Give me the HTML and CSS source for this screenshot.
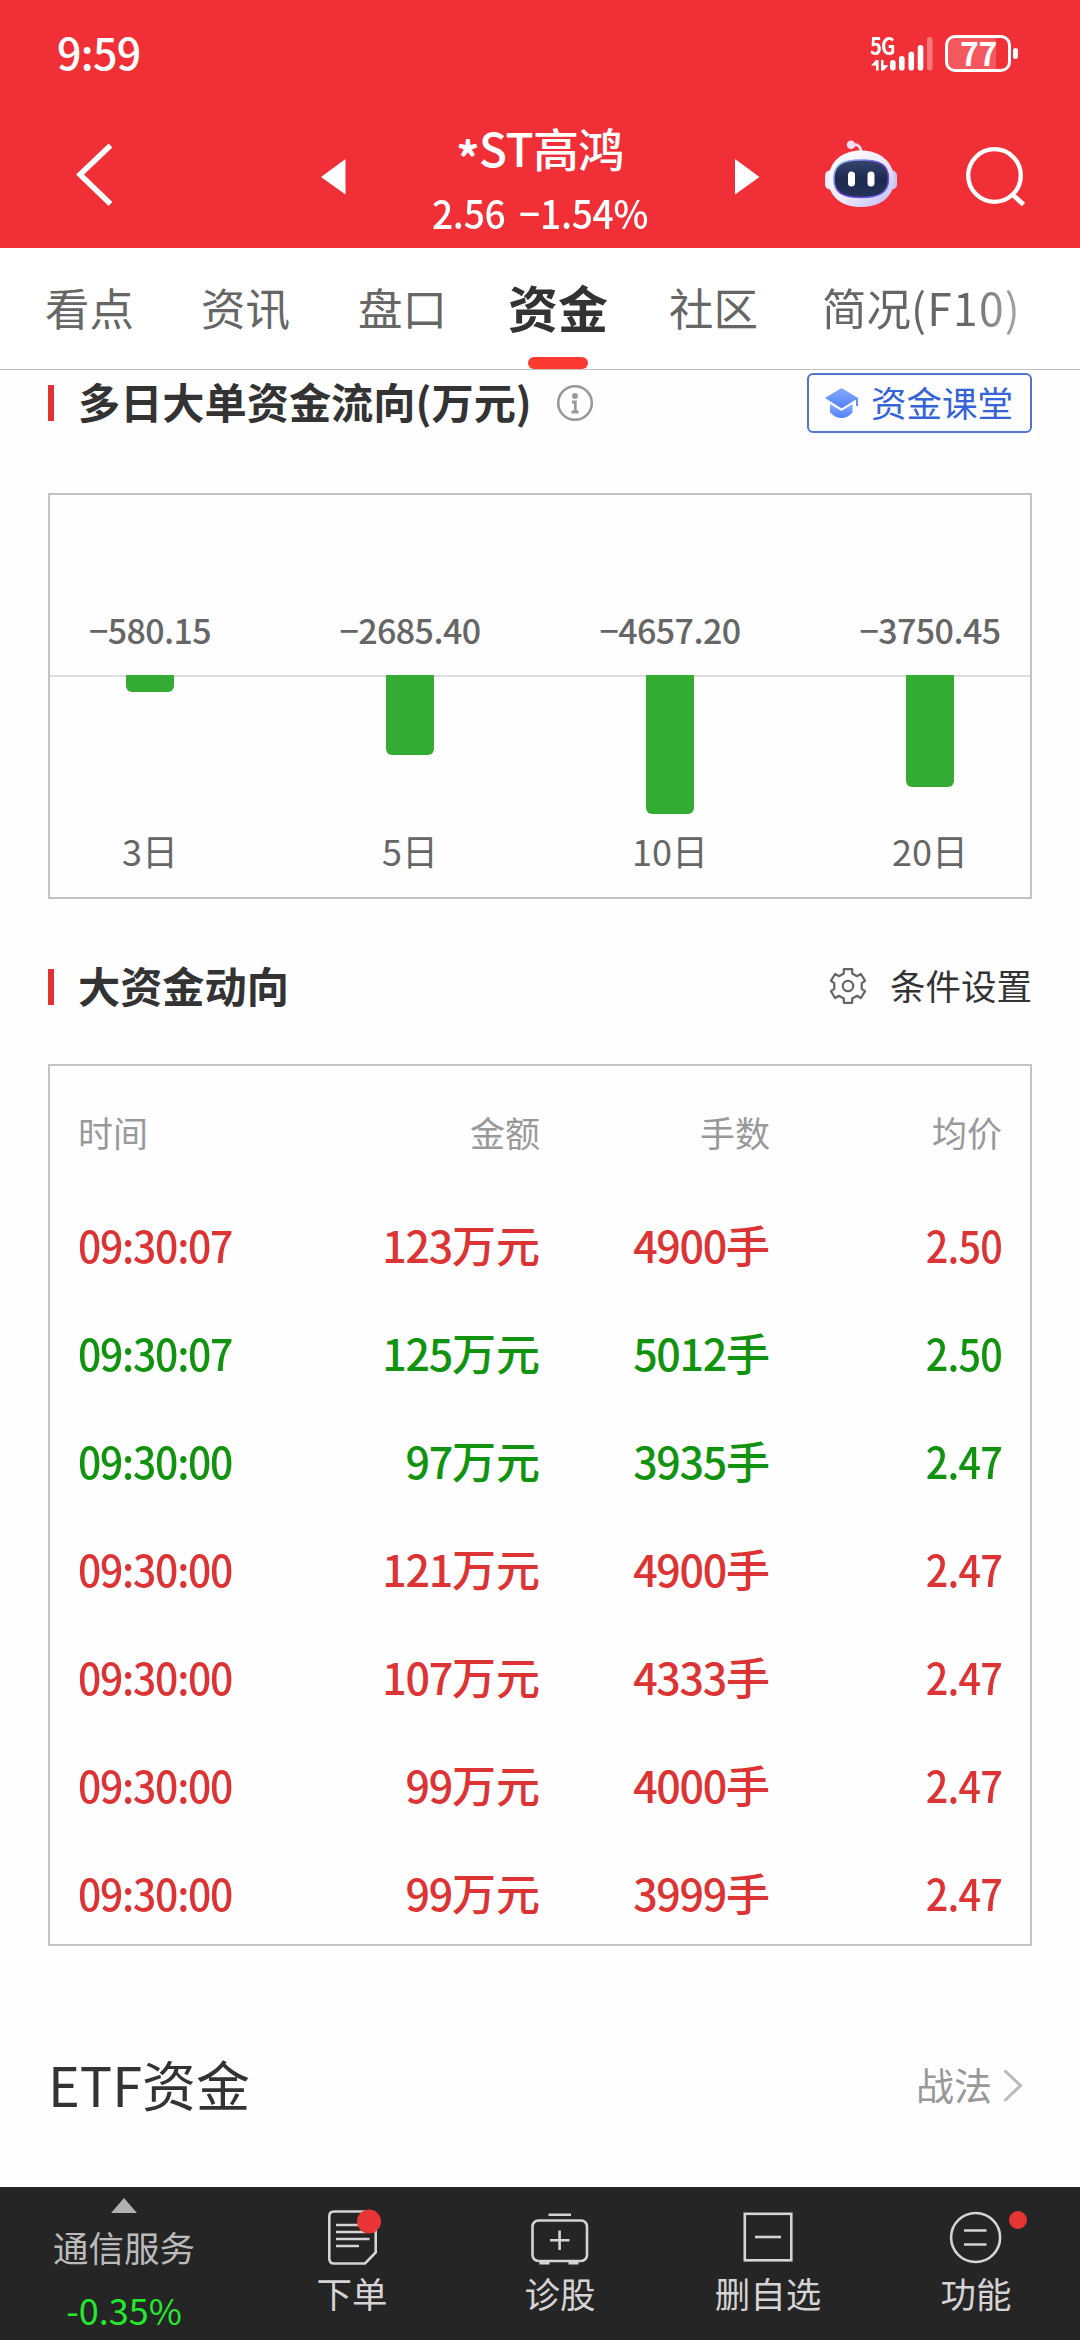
FILE: index.html
```html
<!DOCTYPE html>
<html lang="zh-CN">
<head>
<meta charset="utf-8">
<title>*ST高鸿 - 资金</title>
<link rel="stylesheet" href="styles.css">
</head>
<body>
<header class="header">
  <div class="status">
    <span class="clock">9:59</span>
    <div class="status-icons">
      <div class="net">
        <span class="net-type">5G</span>
        <svg class="signal" viewBox="870 35 65 40" width="65" height="40">
          <g fill="#fff">
            <path d="M871 65.500 876 60h2.500v10.500h-2.500v-5zM881 60h2.500v5l5 .5-5 5H881z"/>
            <rect x="890" y="60" width="5.600" height="10.500" rx="2.800"/>
            <rect x="899" y="56" width="5.600" height="14.500" rx="2.800"/>
            <rect x="908.500" y="51.500" width="5.600" height="19" rx="2.800"/>
            <rect x="917.700" y="45" width="5.600" height="25.500" rx="2.800"/>
            <rect x="927" y="37" width="5.600" height="33.500" rx="2.800" opacity=".35"/>
          </g>
        </svg>
      </div>
      <div class="battery"><span class="battery-fill"></span><span class="battery-text">77</span></div>
      <span class="battery-tip"></span>
    </div>
  </div>
  <div class="appbar">
    <svg class="back" viewBox="65 140 60 70" width="60" height="70"><path d="M110.500 145.500 80 174.500l30.500 29.500" fill="none" stroke="#fff" stroke-width="5.500"/></svg>
    <svg class="prev" viewBox="318 155 30 44" width="30" height="44"><path d="M345.500 159v35.500L321 177z" fill="#fff"/></svg>
    <div class="stock">
      <div class="stock-name"><span class="star">*</span>ST高鸿</div>
      <div class="stock-quote">2.56 −1.54%</div>
    </div>
    <svg class="next" viewBox="732 155 30 44" width="30" height="44"><path d="M735 159v35.500L759.500 177z" fill="#fff"/></svg>
    <svg class="robot" viewBox="0 0 90 90" width="90" height="90">
      <defs>
        <linearGradient id="shell" x1="0" y1="0" x2="1" y2="1"><stop offset="0" stop-color="#fff"/><stop offset=".55" stop-color="#ece9fc"/><stop offset="1" stop-color="#bfb9f2"/></linearGradient>
        <linearGradient id="rim" x1="0" y1="0" x2="1" y2="1"><stop offset="0" stop-color="#8fd6f2"/><stop offset=".5" stop-color="#6a3fd8"/><stop offset="1" stop-color="#5d62e0"/></linearGradient>
        <linearGradient id="face" x1="0" y1="0" x2="0" y2="1"><stop offset="0" stop-color="#39456e"/><stop offset=".5" stop-color="#1c2a50"/><stop offset="1" stop-color="#243159"/></linearGradient>
      </defs>
      <rect x="10" y="40.500" width="10" height="19" rx="5" fill="#eceafa"/>
      <rect x="72" y="40.500" width="10" height="19" rx="5" fill="#cbc6f2"/>
      <path d="M37 14.500q9-1 9 8" fill="none" stroke="#efd6ee" stroke-width="3"/>
      <circle cx="36" cy="14.800" r="4.300" fill="#f1def4"/>
      <path d="M46 20.500C64 20.500 79 31 79 50 79 67 65 77 46 77S13.500 67 13.500 50C13.500 31 28 20.500 46 20.500z" fill="url(#shell)"/>
      <path d="M46 30C64 30 73.500 34 73.500 48.500 73.500 63 64 67.500 46 67.500S19 63 19 48.500C19 34 28 30 46 30z" fill="url(#face)" stroke="url(#rim)" stroke-width="1.500"/>
      <rect x="33" y="41.500" width="7" height="15" rx="3.500" fill="#fff"/>
      <rect x="52.500" y="41.500" width="7" height="15" rx="3.500" fill="#fff"/>
    </svg>
    <svg class="search" viewBox="963 145 65 65" width="65" height="65"><g fill="none" stroke="#fff" stroke-width="4.300"><circle cx="994.500" cy="175.500" r="26.300"/><path d="M1012.500 194.500 1023.500 204.500" stroke-width="4.800"/></g></svg>
  </div>
</header>

<nav class="tabs">
  <a class="tab">看点</a>
  <a class="tab">资讯</a>
  <a class="tab">盘口</a>
  <a class="tab tab-active">资金</a>
  <a class="tab">社区</a>
  <a class="tab tab-fade">简况<span class="code">(F10)</span></a>
</nav>

<main class="content">
  <div class="section-head flow-head">
    <h2 class="section-title">多日大单资金流向(万元)</h2>
    <svg class="info" viewBox="555 383 40 40" width="40" height="40"><circle cx="575" cy="403" r="16.800" fill="none" stroke="#999" stroke-width="2.600"/><circle cx="575" cy="396" r="3" fill="#999"/><path d="M572 402h3.300v10M571.500 412h7" fill="none" stroke="#999" stroke-width="2.800"/></svg>
    <a class="lesson">
      <svg viewBox="824 386 36 34" width="36" height="34">
        <defs><linearGradient id="cap" x1="0" y1="0" x2="0" y2="1"><stop offset="0" stop-color="#86aaff"/><stop offset="1" stop-color="#5281f8"/></linearGradient></defs>
        <g fill="url(#cap)"><path d="M841.500 388 825 398l16.500 10.500L856 399.500V406h2V398z"/><path d="M830 404v8.500q5.500 5.500 11.500 5.500t11-5.500V404l-11 7z"/></g>
      </svg>
      <span>资金课堂</span>
    </a>
  </div>

  <section class="card chart">
    <div class="col"><span class="val">−580.15</span><span class="track"><i class="bar" style="height:17px"></i></span><span class="day">3日</span></div>
    <div class="col"><span class="val">−2685.40</span><span class="track"><i class="bar" style="height:80px"></i></span><span class="day">5日</span></div>
    <div class="col"><span class="val">−4657.20</span><span class="track"><i class="bar" style="height:139px"></i></span><span class="day">10日</span></div>
    <div class="col"><span class="val">−3750.45</span><span class="track"><i class="bar" style="height:112px"></i></span><span class="day">20日</span></div>
  </section>

  <div class="section-head move-head">
    <h2 class="section-title">大资金动向</h2>
    <a class="settings">
      <svg viewBox="0 0 60 60" width="60" height="60"><path d="M21.800 14.500v-4.300h8.400v4.300l4.800 2.700 3.900-2.200 4.200 6.800-3.400 2.400v5.600l3.400 2.400-4.200 6.800-3.900-2.200-4.800 2.700v4.300h-8.400v-4.300L17 36.800 13.100 39l-4.200-6.800 3.400-2.400v-5.600l-3.400-2.400L13.100 15l3.900 2.200z" fill="none" stroke="#666" stroke-width="2.200" stroke-linejoin="round"/><circle cx="26" cy="27" r="5.200" fill="none" stroke="#666" stroke-width="2.200"/></svg>
      <span>条件设置</span>
    </a>
  </div>

  <section class="card deals">
    <div class="row row-head"><span>时间</span><span>金额</span><span>手数</span><span>均价</span></div>
    <div class="row up"><span class="time">09:30:07</span><span>123<b>万元</b></span><span>4900<b>手</b></span><span class="price">2.50</span></div>
    <div class="row down"><span class="time">09:30:07</span><span>125<b>万元</b></span><span>5012<b>手</b></span><span class="price">2.50</span></div>
    <div class="row down"><span class="time">09:30:00</span><span>97<b>万元</b></span><span>3935<b>手</b></span><span class="price">2.47</span></div>
    <div class="row up"><span class="time">09:30:00</span><span>121<b>万元</b></span><span>4900<b>手</b></span><span class="price">2.47</span></div>
    <div class="row up"><span class="time">09:30:00</span><span>107<b>万元</b></span><span>4333<b>手</b></span><span class="price">2.47</span></div>
    <div class="row up"><span class="time">09:30:00</span><span>99<b>万元</b></span><span>4000<b>手</b></span><span class="price">2.47</span></div>
    <div class="row up"><span class="time">09:30:00</span><span>99<b>万元</b></span><span>3999<b>手</b></span><span class="price">2.47</span></div>
  </section>

  <div class="etf">
    <h2 class="etf-title">ETF资金</h2>
    <a class="tactics"><span>战法</span><svg viewBox="1001 2070 24 38" width="24" height="38"><path d="M1003.500 2073.500 1019.500 2088.500 1003.500 2104" fill="none" stroke="#bbb" stroke-width="3"/></svg></a>
  </div>
</main>

<footer class="bottom">
  <div class="sector">
    <svg viewBox="0 0 26 15" width="26" height="15"><path d="M13 0l13 15H0z" fill="#b2b2b2"/></svg>
    <span class="sector-name">通信服务</span>
    <span class="sector-change">-0.35%</span>
  </div>
  <a class="action">
    <svg viewBox="322 2207 60 60" width="60" height="60"><g fill="none" stroke="#d5d3d4" stroke-width="2.600"><path d="M334 2211.500h37q4.700 0 4.700 5v36L365 2263.500h-31q-4.700 0-4.700-5v-42q0-5 4.700-5z"/><path d="M336 2225h26M336 2232h30M336 2239h33.500M336 2246h23"/></g><circle cx="369" cy="2221.500" r="12" fill="#e83434"/></svg>
    <span>下单</span>
  </a>
  <a class="action">
    <svg viewBox="530 2207 60 60" width="60" height="60"><g fill="none" stroke="#d5d3d4" stroke-width="2.600"><rect x="532.500" y="2220.500" width="54.500" height="40.500" rx="6"/><path d="M548.500 2214.700h22.500M550 2240.300h19.500M559.600 2230.500v19.500"/><path d="M539.500 2262.700h10M568.500 2262.700h10" stroke-width="3.600"/></g></svg>
    <span>诊股</span>
  </a>
  <a class="action">
    <svg viewBox="737 2207 60 60" width="60" height="60"><g fill="none" stroke="#d5d3d4" stroke-width="2.600"><rect x="743.800" y="2213.800" width="46.500" height="46.500"/><path d="M754 2237h26"/></g></svg>
    <span>删自选</span>
  </a>
  <a class="action">
    <svg viewBox="922 2207 108 60" width="108" height="60"><g fill="none" stroke="#d5d3d4" stroke-width="2.600"><circle cx="975.600" cy="2237.500" r="24.500"/><path d="M964 2230.500h22.500M964 2244.500h22.500"/></g><circle cx="1018" cy="2220" r="9" fill="#e83434"/></svg>
    <span>功能</span>
  </a>
</footer>
</body>
</html>
```
FILE: styles.css
```css
* { box-sizing: border-box; }

body {
  margin: 0;
  width: 1080px;
  height: 2340px;
  overflow: hidden;
  display: flex;
  flex-direction: column;
  background: #fefefe;
  color: #333;
  font-family: "Noto Sans CJK SC", sans-serif;
  line-height: 1;
}

h2 { margin: 0; }
svg { display: block; flex: none; }
span { white-space: nowrap; }

/* header */
.header {
  height: 248px;
  flex: none;
  background: #f12f37;
  color: #fff;
}
.status {
  height: 108px;
  padding: 0 62px 0 57px;
  display: flex;
  justify-content: space-between;
}
.clock {
  margin-top: 30px;
  font-size: 43px;
  font-weight: 500;
  letter-spacing: -0.7px;
}
.status-icons { display: flex; padding-top: 35px; }
.net { position: relative; width: 65px; }
.net-type {
  position: absolute;
  left: 0;
  top: -2px;
  font-size: 24px;
  font-weight: 700;
  letter-spacing: -1px;
  transform: scaleX(.84);
  transform-origin: left;
}
.battery {
  position: relative;
  margin-left: 10px;
  width: 66px;
  height: 37px;
  border: 3px solid #fff;
  border-radius: 10px;
}
.battery-fill {
  display: block;
  width: 48px;
  height: 31px;
  border-radius: 7px 0 0 7px;
  background: rgba(255, 255, 255, .2);
}
.battery-text {
  position: absolute;
  left: 12px;
  top: -2px;
  font-size: 32px;
  font-weight: 700;
  letter-spacing: -0.5px;
}
.battery-tip {
  margin: 13px 0 0 2px;
  width: 5px;
  height: 11px;
  border-radius: 3px;
  background: #fff;
}

.appbar { display: flex; height: 140px; }
.back { margin: 32px 0 0 65px; }
.prev { margin: 47px 0 0 193px; }
.stock {
  width: 384px;
  text-align: center;
  font-weight: 500;
}
.stock-name {
  margin-top: 16px;
  font-size: 46px;
  line-height: 46px;
  letter-spacing: -0.6px;
}
.star { font-weight: 700; position: relative; top: 9px; }
.stock-quote {
  margin-top: 22px;
  font-size: 39.5px;
  line-height: 40px;
  letter-spacing: -0.3px;
  word-spacing: 6px;
  transform: scaleX(.94);
}
.next { margin: 47px 0 0 0; }
.robot { margin: 22px 0 0 53px; }
.search { margin: 37px 0 0 58px; }

/* tabs */
.tabs {
  height: 122px;
  flex: none;
  padding-left: 45px;
  border-bottom: 1px solid #c0c0c0;
  display: grid;
  grid-template-columns: 156px 157px 150px 161px 153px auto;
  background: #fff;
}
.tab {
  font-size: 44.5px;
  line-height: 45px;
  padding-top: 36px;
  color: #666;
}
.tab-active {
  position: relative;
  font-size: 50px;
  font-weight: 700;
  color: #333;
}
.tab-active::after {
  content: "";
  position: absolute;
  left: 20px;
  bottom: 0;
  width: 60px;
  height: 12px;
  border-radius: 6px;
  background: #fb3b31;
}
.tab-fade {
  justify-self: start;
  background: linear-gradient(90deg, #666 72%, #aaa);
  -webkit-background-clip: text;
  background-clip: text;
  color: transparent;
}
.code { letter-spacing: 1.2px; }

/* content */
.content { flex: 1; min-height: 0; padding: 0 48px; }
.section-head { display: flex; align-items: center; }
.flow-head { height: 66px; }
.move-head { height: 165px; padding-top: 10px; }
.section-title {
  border-left: 6px solid #e03434;
  padding-left: 24px;
  height: 36px;
  font-size: 42.200px;
  line-height: 32px;
  font-weight: 700;
}
.info { margin-left: 23px; }
.lesson {
  margin-left: auto;
  width: 225px;
  height: 60px;
  border: 2px solid #4f76cc;
  border-radius: 6px;
  display: flex;
  align-items: center;
  padding-left: 15px;
  gap: 11px;
  font-size: 35.5px;
  color: #3663d6;
}
.lesson span { padding-bottom: 3px; }
.card { border: 2px solid #c4c4c4; }

.chart {
  height: 406px;
  margin-top: 57px;
  display: grid;
  grid-template-columns: repeat(4, 260px);
  justify-content: center;
  background: linear-gradient(#dedede, #dedede) 0 180px / 100% 2px no-repeat;
}
.col {
  display: flex;
  flex-direction: column;
  align-items: center;
  font-size: 34px;
  color: #666;
}
.val {
  margin-top: 118px;
  height: 62px;
  font-weight: 500;
  letter-spacing: -0.6px;
}
.track { height: 157px; }
.bar {
  display: block;
  width: 48px;
  border-radius: 0 0 6px 6px;
  background: #34ac34;
}
.day { font-size: 36px; }

.settings {
  margin-left: auto;
  display: flex;
  align-items: center;
  gap: 8px;
  font-size: 35.5px;
}
.settings svg { margin-top: 5px; }
.settings span { padding-bottom: 3px; }

.deals {
  height: 882px;
  padding: 0 28px;
}
.row {
  height: 108px;
  padding-bottom: 4px;
  display: grid;
  grid-template-columns: 202px 260px 230px 1fr;
  align-items: center;
  text-align: right;
  font-size: 43px;
  font-weight: 500;
  letter-spacing: -1.3px;
}
.row b {
  font-size: 44px;
  font-weight: 500;
  letter-spacing: 0;
}
.row span:first-child { text-align: left; }
.row .time {
  letter-spacing: -1.3px;
  transform: scaleX(.95);
  transform-origin: left;
}
.row .price {
  letter-spacing: -0.9px;
  transform: scaleX(.92);
  transform-origin: right;
}
.row-head {
  height: 126px;
  padding: 4px 0 0;
  font-size: 35px;
  font-weight: 400;
  letter-spacing: 0;
  color: #999;
}
.up { color: #dc3434; }
.down { color: #12930f; }

.etf {
  height: 241px;
  padding: 34px 6px 0 0;
  display: flex;
  align-items: center;
  justify-content: space-between;
}
.etf-title { font-size: 54px; font-weight: 400; }
.tactics {
  display: flex;
  align-items: center;
  gap: 10px;
  font-size: 38px;
  color: #999;
}
.tactics svg { margin-top: 5px; }

/* bottom bar */
.bottom {
  height: 153px;
  flex: none;
  display: grid;
  grid-template-columns: 248px repeat(4, 208px);
  background: #252525;
  color: #d5d3d4;
  font-size: 35.5px;
}
.sector {
  display: flex;
  flex-direction: column;
  align-items: center;
  padding-top: 11px;
}
.sector-name { margin-top: 16px; color: #bbb; }
.sector-change { margin-top: 26px; color: #25e82e; font-size: 36px; }
.action {
  display: flex;
  flex-direction: column;
  align-items: center;
  padding-top: 20px;
  gap: 8px;
}
```
